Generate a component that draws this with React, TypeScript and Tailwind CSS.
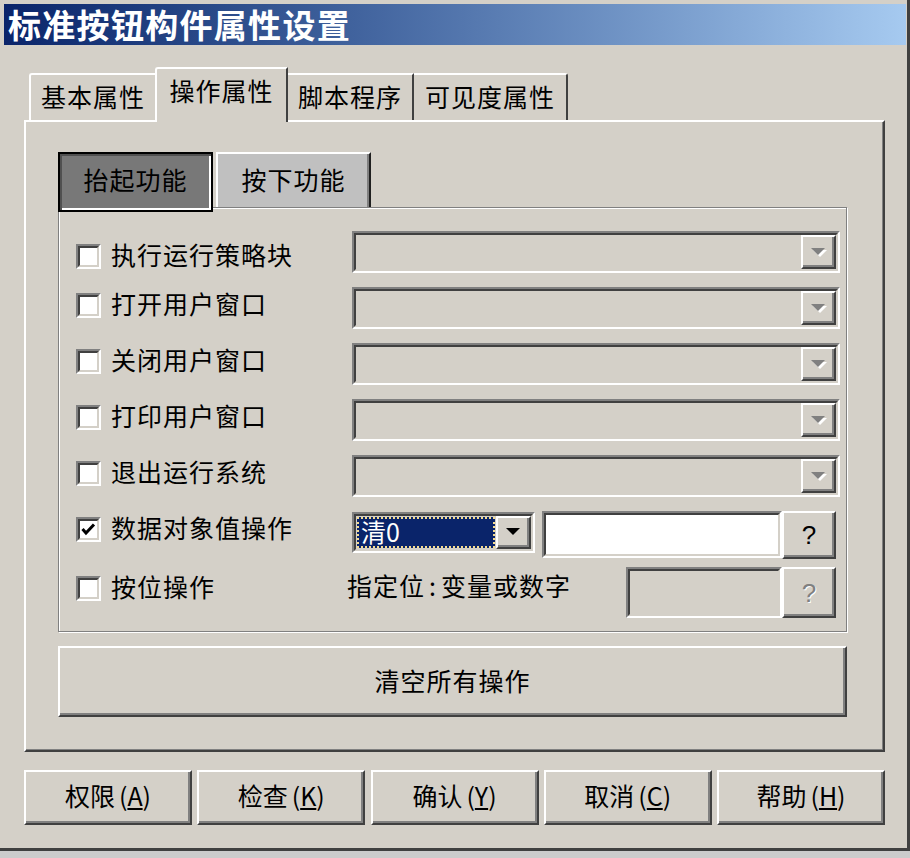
import React from "react";

const FONT = "font-['Noto_Sans_CJK_SC','Liberation_Sans',sans-serif]";

function Arrow({ disabled }: { disabled?: boolean }) {
  return (
    <svg width="18" height="11" viewBox="0 0 18 11">
      {disabled ? (
        <>
          <polygon points="3,3 17,3 10,10" fill="#ffffff" />
          <polygon points="1,1 15,1 8,8" fill="#808080" />
        </>
      ) : (
        <polygon points="1,1 15,1 8,8" fill="#000000" />
      )}
    </svg>
  );
}

function Sunken({ className, children }: { className: string; children?: React.ReactNode }) {
  return (
    <div className={`border-2 border-t-[#808080] border-l-[#808080] border-r-white border-b-white ${className}`}>
      <div className="w-full h-full border-2 border-t-[#404040] border-l-[#404040] border-r-[#d4d0c8] border-b-[#d4d0c8] flex">
        {children}
      </div>
    </div>
  );
}

function Raised({ className, children }: { className: string; children?: React.ReactNode }) {
  return (
    <div
      className={`border-2 border-t-white border-l-white border-r-[#404040] border-b-[#404040] shadow-[inset_-2px_-2px_0_#808080] flex items-center justify-center ${className}`}
    >
      {children}
    </div>
  );
}

function Checkbox({ checked }: { checked?: boolean }) {
  return (
    <div className="w-[25px] h-[25px] shrink-0 border-2 border-t-[#808080] border-l-[#808080] border-r-white border-b-white">
      <div className="w-full h-full border-2 border-t-[#404040] border-l-[#404040] border-r-[#d4d0c8] border-b-[#d4d0c8] bg-white flex items-center justify-center">
        {checked && (
          <svg width="15" height="15" viewBox="0 0 15 15">
            <polyline points="1.5,7 5,11 13,2.5" fill="none" stroke="#000" strokeWidth="3" />
          </svg>
        )}
      </div>
    </div>
  );
}

function Combo() {
  return (
    <Sunken className="w-[488px] h-[42px] mt-[8px] bg-[#d4d0c8]">
      <div className="flex-1" />
      <Raised className="w-[35px] h-full bg-[#d4d0c8]">
        <Arrow disabled />
      </Raised>
    </Sunken>
  );
}

function LeftLabel({ text, checked, extra }: { text: string; checked?: boolean; extra?: string }) {
  return (
    <div className={`w-[276px] h-[52px] flex items-center shrink-0 ${extra ?? ""}`}>
      <Checkbox checked={checked} />
      <span className="ml-[10px] -mt-[3px] text-[25px] tracking-[1px] leading-none text-black whitespace-nowrap">{text}</span>
    </div>
  );
}

function BottomButton({ label, k }: { label: string; k: string }) {
  return (
    <Raised className="w-[168px] h-[55px] bg-[#d4d0c8]">
      <span className="-mt-[4px] text-[25px] leading-none text-black whitespace-nowrap">
        {label}
        <span className="ml-[4px]">(</span>
        <u>{k}</u>)
      </span>
    </Raised>
  );
}

export default function App() {
  const rows = ["执行运行策略块", "打开用户窗口", "关闭用户窗口", "打印用户窗口", "退出运行系统"];
  return (
    <div className={`w-[910px] h-[858px] bg-[#cccccc] ${FONT}`}>
      <div className="w-[910px] h-[851px] bg-[#d4d0c8] border-r-[3px] border-b-[3px] border-[#404040] pt-[4px] pl-[4px]">
        {/* Title bar */}
        <div className="w-[902px] h-[41px] bg-gradient-to-r from-[#0a246a] to-[#a6caf0] flex items-center pl-[4px]">
          <span className="text-white font-bold text-[33px] tracking-[1.3px] leading-none">标准按钮构件属性设置</span>
        </div>

        <div className="ml-[20px]">
          {/* Tabs */}
          <div className="mt-[22px] h-[53px] flex items-end">
            <div className="ml-[5px] w-[126px] h-[47px] border-t-2 border-l-2 border-white rounded-tl-[3px] flex items-center justify-center">
              <span className="text-[25px] tracking-[1px] leading-none -mt-[3px]">基本属性</span>
            </div>
            <div className="relative z-10 w-[133px] h-[55px] -mb-[2px] bg-[#d4d0c8] border-t-2 border-l-2 border-white border-r-2 border-r-[#404040] rounded-tl-[3px] flex items-start justify-center">
              <span className="text-[25px] tracking-[1px] leading-none mt-[9px]">操作属性</span>
            </div>
            <div className="w-[126px] h-[47px] border-t-2 border-white border-r-2 border-r-[#404040] flex items-center justify-center">
              <span className="text-[25px] tracking-[1px] leading-none -mt-[3px]">脚本程序</span>
            </div>
            <div className="w-[154px] h-[47px] border-t-2 border-white border-r-2 border-r-[#404040] rounded-tr-[3px] flex items-center justify-center">
              <span className="text-[25px] tracking-[1px] leading-none -mt-[3px]">可见度属性</span>
            </div>
          </div>

          {/* Panel */}
          <div className="w-[861px] h-[632px] border-t-2 border-l-2 border-white border-r-2 border-b-2 border-r-[#404040] border-b-[#404040] shadow-[inset_-1px_-1px_0_#808080] pt-[30px] pl-[32px]">
            {/* Sub tabs */}
            <div className="h-[55px] flex items-end">
              <div className="relative z-10 w-[155px] h-[60px] -mb-[5px] border-2 border-black bg-[#787878] shadow-[inset_2px_2px_0_#505050,inset_-2px_-2px_0_#ffffff] flex items-center justify-center">
                <span className="text-[25px] tracking-[1px] leading-none -mt-[5px]">抬起功能</span>
              </div>
              <div className="ml-[3px] w-[155px] h-[55px] border-t-2 border-l-2 border-white border-r-2 border-r-[#202020] bg-[#c0c0c0] shadow-[inset_-2px_0_0_#808080] flex items-center justify-center">
                <span className="text-[25px] tracking-[1px] leading-none -mt-[2px]">按下功能</span>
              </div>
            </div>

            {/* Group */}
            <div className="w-[789px] h-[425px] border border-[#808080] shadow-[inset_1px_1px_0_#ffffff,1px_1px_0_#ffffff] pt-[15px] pl-[17px]">
              {rows.map((r, i) => (
                <div key={r} className="h-[56px] flex items-start">
                  <LeftLabel text={r} extra={i === 0 ? "mt-[7px]" : ""} />
                  <Combo />
                </div>
              ))}

              {/* Row 6 */}
              <div className="h-[56px] flex items-start">
                <LeftLabel text="数据对象值操作" checked />
                <Sunken className="w-[183px] h-[41px] mt-[9px] bg-[#d4d0c8]">
                  <div className="flex-1 m-[1px] border-2 border-dotted border-[#f5dc90] bg-[#0a246a] flex items-center pl-[2px]">
                    <span className="text-white text-[25px] leading-none -mt-[3px]">清0</span>
                  </div>
                  <Raised className="w-[35px] h-full bg-[#d4d0c8]">
                    <Arrow />
                  </Raised>
                </Sunken>
                <Sunken className="ml-[7px] w-[240px] h-[47px] mt-[8px] bg-white">
                  <div className="flex-1 bg-white" />
                </Sunken>
                <Raised className="w-[54px] h-[48px] mt-[8px] bg-[#d4d0c8]">
                  <span className="font-['Liberation_Sans',sans-serif] text-[26px] leading-none text-black">?</span>
                </Raised>
              </div>

              {/* Row 7 */}
              <div className="h-[64px] flex items-start">
                <div className="w-[271px] h-[58px] flex items-center shrink-0">
                  <Checkbox />
                  <span className="ml-[10px] -mt-[3px] text-[25px] tracking-[1px] leading-none whitespace-nowrap">按位操作</span>
                </div>
                <div className="w-[279px] h-[58px] flex items-center shrink-0">
                  <span className="-mt-[6px] text-[25px] tracking-[1px] leading-none whitespace-nowrap">
                    指定位<span className="mx-[4px]">:</span>变量或数字
                  </span>
                </div>
                <Sunken className="w-[156px] h-[51px] mt-[8px] bg-[#d4d0c8]" />
                <Raised className="w-[54px] h-[51px] mt-[8px] bg-[#d4d0c8]">
                  <span className="relative font-['Liberation_Sans',sans-serif] text-[26px] leading-none text-[#808080] [text-shadow:1px_1px_0_#ffffff]">?</span>
                </Raised>
              </div>
            </div>

            {/* Clear all */}
            <Raised className="mt-[14px] w-[789px] h-[71px] bg-[#d4d0c8]">
              <span className="-mt-[3px] text-[25px] tracking-[1px] leading-none">清空所有操作</span>
            </Raised>
          </div>

          {/* Bottom buttons */}
          <div className="mt-[18px] w-[861px] flex justify-between">
            <BottomButton label="权限" k="A" />
            <BottomButton label="检查" k="K" />
            <BottomButton label="确认" k="Y" />
            <BottomButton label="取消" k="C" />
            <BottomButton label="帮助" k="H" />
          </div>
        </div>
      </div>
    </div>
  );
}
